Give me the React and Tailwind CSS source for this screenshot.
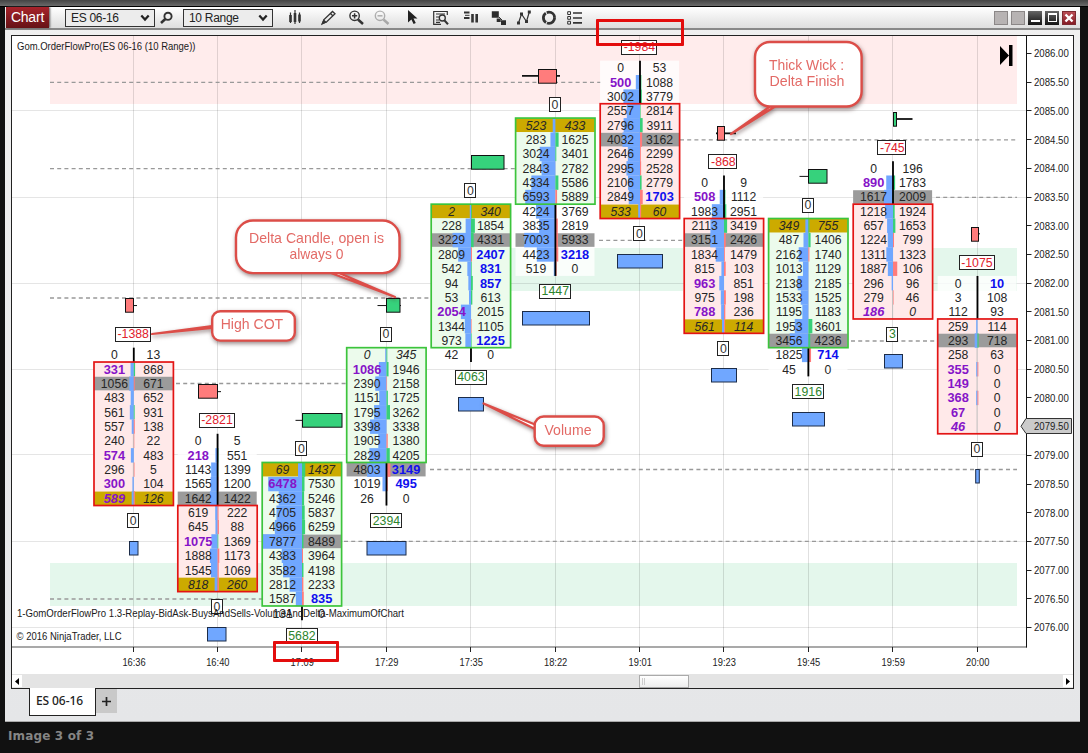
import React from "react";

const COLUMNS = [
  { time: "16:36", start: 21, box: [22, 31], tone: "red", top: "-1388", bottom: "0", candle: [125.5, 133.5, 133.5, 137], volume: [129.5, 138],
    rows: [[0, 13], [331, 868, "L"], [1056, 671, "y"], [483, 652], [561, 931], [557, 138], [240, 22], [574, 483, "L"], [296, 5], [300, 104, "L"], [589, 126, "Lg"]] },
  { time: "16:40", start: 27, box: [32, 37], tone: "red", top: "-2821", bottom: "0", candle: [198.5, 217.5, 217.5, 221], volume: [207.5, 226],
    rows: [[0, 5], [218, 551, "L"], [1143, 1399], [1565, 1200], [1642, 1422, "y"], [619, 222], [645, 88], [1075, 1369, "L"], [1888, 1173], [1545, 1069], [818, 260, "g"]] },
  { time: "17:09", start: 29, box: [29, 38], tone: "green", top: "0", bottom: "5682", candle: [302.5, 342, 295.5, 302], up: true,
    rows: [[69, 1437, "g"], [6478, 7530, "L"], [4362, 5246], [4705, 5837], [4966, 6259], [7877, 8489, "y"], [4383, 3964], [3582, 4198], [2812, 2233], [1587, 835, "R"], [131, 0]] },
  { time: "17:29", start: 21, box: [21, 28], tone: "green", top: "0", bottom: "2394", candle: [386.5, 400, 377.5, 401], up: true, volume: [367, 406],
    rows: [[0, 345, "i"], [1086, 1946, "L"], [2390, 2158], [1151, 1725], [1795, 3262], [3398, 3338], [1905, 1380], [2829, 4205], [4803, 3149, "yR"], [1019, 495, "R"], [26, 0]] },
  { time: "17:35", start: 11, box: [11, 20], tone: "green", top: "0", bottom: "4063", candle: [471.5, 504, 471.5, 504], up: true, volume: [458.5, 483.5],
    rows: [[2, 340, "g"], [228, 1854], [3229, 4331, "y"], [2809, 2407, "R"], [542, 831, "R"], [94, 857, "R"], [53, 613], [2054, 2015, "L"], [1344, 1105], [973, 1225, "R"], [42, 0]] },
  { time: "18:22", start: 5, box: [5, 10], tone: "green", top: "0", bottom: "1447", candle: [538.5, 556.5, 522, 560], thick: true, volume: [522.5, 589.5],
    rows: [[523, 433, "g"], [283, 1625], [3024, 3401], [2843, 2782], [4334, 5586], [6593, 5889], [4224, 3769], [3835, 2819], [7003, 5933, "y"], [4423, 3218, "R"], [519, 0]] },
  { time: "19:01", start: 1, box: [4, 11], tone: "red", top: "-1984", bottom: "0", volume: [617.5, 662.5],
    rows: [[0, 53], [500, 1088, "L"], [3002, 3779], [2557, 2814], [2796, 3911], [4032, 3162, "y"], [2646, 2299], [2995, 2528], [2106, 2779], [2849, 1703, "R"], [533, 60, "g"]] },
  { time: "19:23", start: 9, box: [12, 19], tone: "red", top: "-868", bottom: "0", candle: [717.5, 724.5, 716, 736], thick: true, volume: [711.5, 736.5],
    rows: [[0, 9], [508, 1112, "L"], [1983, 2951], [2113, 3419], [3151, 2426, "y"], [1834, 1479], [815, 103], [963, 851, "L"], [975, 198], [788, 236, "L"], [561, 114, "g"]] },
  { time: "19:45", start: 12, box: [12, 20], tone: "green", top: "0", bottom: "1916", candle: [808.5, 827, 799.5, 808], up: true, volume: [792.5, 824.5],
    rows: [[349, 755, "g"], [487, 1406], [2162, 1740], [1013, 1129], [2138, 2185], [1533, 1525], [1195, 1183], [1953, 3601], [3456, 4236, "y"], [1825, 714, "R"], [45, 0]] },
  { time: "19:59", start: 8, box: [11, 18], tone: "red", top: "-745", bottom: "3", candle: [893.5, 896.5, 896, 912.5], up: true, thick: true, volume: [884.5, 902.5],
    rows: [[0, 196], [890, 1783, "L"], [1617, 2009, "y"], [1218, 1924], [657, 1653], [1224, 799], [1311, 1323], [1887, 106], [296, 96], [279, 46], [186, 0, "Li"]] },
  { time: "20:00", start: 16, box: [19, 26], tone: "red", top: "-1075", bottom: "0", candle: [971.5, 978.5, 978, 980], volume: [975.7, 979.3],
    rows: [[0, 10, "R"], [3, 108], [112, 93], [259, 114], [293, 718, "y"], [258, 63], [355, 0, "L"], [149, 0, "L"], [368, 0, "L"], [67, 0, "L"], [46, 0, "Li"]] },
];

const TICK = 14.35;
const SCALE = 39 / 16366;
const CENTERS = [133.4, 217.2, 301.6, 386.1, 470.6, 555, 639.6, 723.6, 808, 892.6, 977.1];
const rowY = (tick) => 53.5 + tick * TICK;
const columnX = (i) => CENTERS[i];
const labelColor = (t) => (t === "0" ? "#333" : t[0] === "-" ? "#e0202c" : "#2c842c");

const DASHES = [
  [82.3, 50, 601], [139.8, 680, 1017], [168.7, 50, 516], [197.3, 936, 1017], [240.4, 599, 683], [298, 50, 431],
  [341, 851, 937], [383.5, 176, 347], [469.5, 430, 1017], [541.3, 344, 1017], [599, 50, 262],
];

function ValueLabel({ x, y, text }) {
  const w = text.length === 1 ? 10.5 : text.length * 6.67 + 4 - (text[0] === "-" ? 2.3 : 0);
  const cx = x - 1 + (text.length === 4 && text[0] !== "-" ? 0.5 : 0);
  return (
    <g>
      <rect x={Math.round(cx - w / 2) + 0.5} y={Math.round(y - 7) + 0.5} width={Math.round(w)} height="14" fill="#fff" stroke="#222" strokeWidth="1" />
      <text x={cx + 0.8} y={y + 4.6} textAnchor="middle" fontSize="12.3" fill={labelColor(text)}>{text}</text>
    </g>
  );
}

function Column({ data, index }) {
  const x = columnX(index);
  const { start, rows, box, tone } = data;
  const end = start + rows.length - 1;
  const top = (t) => rowY(t) - TICK / 2;
  const red = tone === "red";
  return (
    <g>
      <rect x={x - 39.5} y={top(start)} width="79" height={rows.length * TICK} fill="#fff" fillOpacity="0.8" />
      <rect x={x - 39.5} y={top(box[0])} width="79.5" height={(box[1] - box[0] + 1) * TICK} fill={red ? "#ffe9e9" : "#ecfbec"} />
      <line x1={x} x2={x} y1={top(start)} y2={top(end + 1)} stroke="#bdbdbd" />
      {rows.map(([l, r, f = ""], i) => {
        const y = top(start + i);
        const band = f.includes("g") ? "#ccaa00" : f.includes("y") ? "#9b9b9b" : null;
        const vol = (l + r) * SCALE;
        const delta = Math.abs(r - l) * SCALE;
        return (
          <g key={i}>
            {band && <rect x={x - 39.5} y={y + 0.4} width="79" height={TICK - 0.8} fill={band} />}
            {vol > 0.8 && <rect x={x - vol} y={y} width={vol + 0.4} height={TICK + 0.1} fill="#70a7ff" />}
            {delta > 0.5 && <rect x={x + 0.4} y={y} width={delta} height={TICK} fill={r > l ? "#38d078" : "#ff7c7c"} />}
          </g>
        );
      })}
      {box[0] > start && <line x1={x + 0.4} x2={x + 0.4} y1={top(start)} y2={top(box[0])} stroke="#000" strokeWidth="1.8" />}
      {box[1] < end && <line x1={x + 0.4} x2={x + 0.4} y1={top(box[1] + 1)} y2={top(end + 1)} stroke="#000" strokeWidth="1.8" />}
      {rows.map(([l, r, f = ""], i) => {
        const y = rowY(start + i) + 4.4;
        const style = /[gi]/.test(f) ? "italic" : "normal";
        const L = f.includes("L");
        const R = f.includes("R");
        return (
          <g key={i} textAnchor="middle" fontStyle={style}>
            <text x={x - 19} y={y} fontSize={L ? 12.8 : 12.2} fontWeight={L ? 700 : 400} fill={L ? "#8614c8" : "#262626"}>{l}</text>
            <text x={x + 20} y={y} fontSize={R ? 12.8 : 12.2} fontWeight={R ? 700 : 400} fill={R ? "#1010ee" : "#262626"}>{r}</text>
          </g>
        );
      })}
      <rect x={x - 39.4} y={top(box[0])} width="79.4" height={(box[1] - box[0] + 1) * TICK} fill="none" stroke={red ? "#e31414" : "#3cc43c"} strokeWidth="1.7" />
      <ValueLabel x={x} y={rowY(start) - 21.2} text={data.top} />
      <ValueLabel x={x} y={rowY(end) + 22} text={data.bottom} />
      {data.candle && (
        <g stroke="#111">
          <line x1={data.candle[2]} x2={data.candle[3]} y1={rowY(start) - 49.3} y2={rowY(start) - 49.3} strokeWidth={data.thick ? 1.8 : 1} />
          <rect x={data.candle[0]} y={Math.round(rowY(start) - 56.6) + 0.5} width={data.candle[1] - data.candle[0]} height="13.7" fill={data.up ? "#36d27c" : "#ff7c7c"} />
        </g>
      )}
      {data.volume && (
        <rect x={data.volume[0]} y={Math.round(rowY(end) + 42.3) + 0.5} width={data.volume[1] - data.volume[0]} height="13.5" fill="#70a7ff" stroke="#1c2c48" />
      )}
    </g>
  );
}

function Callout({ x, y, w, h, r, tail, lines }) {
  return (
    <g className="drop-shadow-[1px_2px_2px_rgba(70,40,40,0.55)]">
      <path d={tail} fill="#fff" stroke="#dc4d48" strokeWidth="2.2" strokeLinejoin="round" />
      <rect x={x} y={y} width={w} height={h} rx={r} fill="#fff" stroke="#dc4d48" strokeWidth="2.4" />
      {lines.map(([t, tx, ty, len]) => (
        <text key={t} x={tx} y={ty} fontSize="14.4" fill="#e36a66" textLength={len} lengthAdjust="spacingAndGlyphs">{t}</text>
      ))}
    </g>
  );
}

function Chart() {
  const prices = Array.from({ length: 21 }, (_, i) => (2086 - i * 0.5).toFixed(2));
  return (
    <svg width="1061" height="638" viewBox="12 36 1061 638" className="block bg-white" fontFamily="'Liberation Sans', Arial, sans-serif">
      <rect x="50" y="36" width="967" height="68" fill="#ffecec" />
      <rect x="511" y="248" width="172" height="43" fill="#e4f7ec" />
      <rect x="932" y="248" width="85" height="43" fill="#e4f7ec" />
      <rect x="50" y="563" width="967" height="43" fill="#e4f7ec" />
      {[110.5, 197.5, 283.5, 369.5, 454.5, 541.5, 627.5].map((y) => <line key={y} x1="12" x2="1026" y1={y} y2={y} stroke="#000" strokeOpacity="0.1" />)}
      {COLUMNS.map((c, i) => <line key={c.time} x1={Math.floor(columnX(i)) + 0.5} x2={Math.floor(columnX(i)) + 0.5} y1="36" y2="647" stroke="#000" strokeOpacity="0.12" />)}
      {DASHES.map(([y, a, b]) => <line key={y} x1={a} x2={b} y1={y} y2={y} stroke="#999" strokeWidth="1.3" strokeDasharray="4 3.2" />)}

      <text x="17" y="49.5" fontSize="10.3" fill="#1a1a1a" textLength="178.5" lengthAdjust="spacingAndGlyphs">Gom.OrderFlowPro(ES 06-16 (10 Range))</text>
      {COLUMNS.map((c, i) => <Column key={c.time} data={c} index={i} />)}
      <text x="17" y="617" fontSize="10.3" fill="#1a1a1a" textLength="387" lengthAdjust="spacingAndGlyphs">1-GomOrderFlowPro 1.3-Replay-BidAsk-BuysAndSells-VolumeAndDelta-MaximumOfChart</text>
      <text x="16.5" y="639.7" fontSize="10.3" fill="#1a1a1a" textLength="105" lengthAdjust="spacingAndGlyphs">© 2016 NinjaTrader, LLC</text>

      <line x1="12" x2="1027" y1="647" y2="647" stroke="#555" strokeWidth="1.2" />
      <line x1="1026.5" x2="1026.5" y1="36" y2="647.5" stroke="#111" />
      {COLUMNS.map((c, i) => (
        <g key={c.time}>
          <line x1={Math.floor(columnX(i)) + 0.5} x2={Math.floor(columnX(i)) + 0.5} y1="647" y2="652" stroke="#222" />
          <text x={columnX(i) - 11} y="666.3" fontSize="10.3" fill="#222" textLength="23.3" lengthAdjust="spacingAndGlyphs">{c.time}</text>
        </g>
      ))}
      {prices.map((p, i) => (
        <g key={p}>
          <line x1="1027" x2="1031.5" y1={Math.floor(rowY(i * 2)) + 0.5} y2={Math.floor(rowY(i * 2)) + 0.5} stroke="#222" />
          {p !== "2079.50" && <text x="1034" y={rowY(i * 2) + 3.9} fontSize="10.3" fill="#222" textLength="34.8" lengthAdjust="spacingAndGlyphs">{p}</text>}
        </g>
      ))}
      <path d="M1021 426.3 L1026 418.5 H1071.5 V433.5 H1026 Z" fill="#cbcbcb" stroke="#333" />
      <text x="1034" y="430.2" fontSize="10.3" fill="#222" textLength="34.8" lengthAdjust="spacingAndGlyphs">2079.50</text>

      <path d="M1000 46 L1009 55.5 L1000 65 Z M1009 45 h3.5 v21 h-3.5 Z" fill="#000" />

      <Callout x={212.2} y={311.2} w={82.6} h={29.4} r={8} tail="M212 326 L152 334 L212 328 Z" lines={[["High COT", 220.7, 329, 62.5]]} />
      <Callout x={236} y={220.5} w={163.5} h={52.6} r={17} tail="M331 273 L395 297 L339 273 Z" lines={[["Delta Candle, open is", 249, 242.5, 135], ["always 0", 289.5, 258.8, 54]]} />
      <Callout x={534.7} y={416.5} w={69} h={29.2} r={9} tail="M535 424.5 L483.5 403.5 L535 429 Z" lines={[["Volume", 544.5, 435.2, 47]]} />
      <Callout x={755} y={42} w={106.6} h={64.5} r={15} tail="M770 106.5 L731 134 L775 106.5 Z" lines={[["Thick Wick :", 769, 69.5, 75], ["Delta Finish", 769.5, 85.8, 75]]} />
    </svg>
  );
}

function Icon({ x, w, children, className }) {
  return (
    <svg width={w} height="18" viewBox={`${x} 9 ${w} 18`} className={`shrink-0 ${className}`} fill="none" stroke="#333" strokeWidth="1.6">
      {children}
    </svg>
  );
}

function Select({ label, className }) {
  return (
    <div className={`flex h-[18px] w-[90px] shrink-0 items-center justify-between border border-[#333] bg-[#ececec] pl-[5px] pr-[4px] text-[12px] leading-none text-[#222] ${className}`}>
      <span className="whitespace-nowrap tracking-[-0.3px]">{label}</span>
      <svg width="10" height="8" viewBox="0 0 10 8" fill="none" stroke="#222" strokeWidth="2.2"><path d="M1.3 1.5 L5 5.6 L8.7 1.5" /></svg>
    </div>
  );
}

function Toolbar() {
  return (
    <div className="flex h-[23px] shrink-0 items-center border-b-2 border-[#888] bg-gradient-to-b from-white to-[#dedede]">
      <div className="ml-px flex h-[21px] w-[43px] shrink-0 items-center justify-center bg-gradient-to-b from-[#a8232b] to-[#661216] text-[14px] tracking-[-0.2px] text-white shadow-[1px_0_2px_#555]">Chart</div>
      <Select label="ES 06-16" className="ml-[16px]" />
      <Icon x={160} w={14} className="ml-[5px]">
        <circle cx="168" cy="16.3" r="3.6" strokeWidth="1.9" /><path d="M165.3 19 L161 23" strokeWidth="2.6" />
      </Icon>
      <Select label="10 Range" className="ml-[9px]" />
      <Icon x={288} w={14} className="ml-[15px]">
        <path d="M290.5 12.5 V23 M295 10 V24 M299.5 12.5 V23" strokeWidth="1.2" /><path d="M290.5 15 V22 M295 13 V22 M299.5 14.5 V21.5" strokeWidth="2.6" />
      </Icon>
      <Icon x={321} w={16} className="ml-[19px]">
        <path d="M322.5 23.5 L324 19.5 L332.5 11.5 L335 13.8 L326.5 22 Z M330.5 13.5 L333 16" strokeWidth="1.3" /><path d="M322.5 23.5 L325.5 22 L323.8 20.5 Z" fill="#333" />
      </Icon>
      <Icon x={348} w={16} className="ml-[11px]">
        <circle cx="354.6" cy="15.8" r="4.7" strokeWidth="1.4" /><path d="M352 15.8 H357.2 M354.6 13.2 V18.4" strokeWidth="1.5" /><path d="M358 19.5 L363 24" strokeWidth="2.5" />
      </Icon>
      <Icon x={374} w={16} className="ml-[10px] opacity-35">
        <circle cx="380" cy="15.8" r="4.7" strokeWidth="1.4" /><path d="M377.5 15.8 H382.5" strokeWidth="1.5" /><path d="M383.5 19.5 L388.5 24" strokeWidth="2.5" />
      </Icon>
      <Icon x={407} w={12} className="ml-[17px]">
        <path d="M408 10 L417.5 18.5 H413.5 L415.8 23 L413.6 24 L411.4 19.6 L408 22.5 Z" fill="#222" stroke="none" />
      </Icon>
      <Icon x={432} w={17} className="ml-[13px]">
        <path d="M447.3 15 V11.5 H433.7 V24.3 H441 M436 14 H445 M436 17 H439 M436 20 H439 M436 22.3 H440" strokeWidth="1.2" /><circle cx="442.3" cy="18" r="3" strokeWidth="1.3" /><path d="M444.3 20.3 L448 24.3" strokeWidth="2" />
      </Icon>
      <Icon x={463} w={16} className="ml-[14px]">
        <path d="M464 12.5 H469.5 M464 18 H469.5" strokeWidth="1.8" /><path d="M465 15.3 H469.5" strokeWidth="1" /><path d="M472.5 14 V22.5 M476.7 14 V22.5" strokeWidth="2.6" />
      </Icon>
      <Icon x={491} w={16} className="ml-[12px]">
        <path d="M491.8 11.3 H498.8 V17.7 H491.8 Z M501 20.3 H506 V25 H501 Z M496.7 18.4 H500.7 V22 H496.7 Z" fill="#2c2c2c" stroke="none" /><path d="M499 17 L502 20" strokeWidth="1" />
      </Icon>
      <Icon x={516} w={16} className="ml-[9px]">
        <path d="M518.5 23 L521.5 14 L526.5 21.5 L529.3 12" strokeWidth="1.2" /><path d="M517 21.5 h3 v3 h-3 Z M520 12.5 h3 v3 h-3 Z M525 20 h3 v3 h-3 Z M527.8 10.5 h3 v3 h-3 Z" fill="#333" stroke="none" />
      </Icon>
      <Icon x={541} w={16} className="ml-[9px]">
        <circle cx="549" cy="17.8" r="5.6" strokeWidth="2.8" strokeDasharray="10.7 1" />
      </Icon>
      <Icon x={566} w={17} className="ml-[9px]">
        <path d="M567.7 11.7 h2.8 v2.8 h-2.8 Z M567.7 16.5 h2.8 v2.8 h-2.8 Z M567.7 21.3 h2.8 v2.8 h-2.8 Z" strokeWidth="1" /><path d="M573 13 H582 M573 18 H582 M573 22.8 H582" strokeWidth="1.7" />
      </Icon>
      <div className="ml-auto mr-[4px] flex gap-[3px]">
        <div className="size-[14px] border border-[#8b8787] bg-[#b7b3b3]" />
        <div className="size-[14px] border border-[#8b8787] bg-[#b7b3b3]" />
        <div className="flex size-[14px] items-end justify-center bg-gradient-to-b from-[#666] to-[#151515] pb-[3px]"><div className="h-[2px] w-[9px] bg-white" /></div>
        <div className="flex size-[14px] items-center justify-center bg-gradient-to-b from-[#666] to-[#151515]"><div className="h-[9px] w-[9px] border border-t-2 border-white" /></div>
        <div className="flex size-[14px] items-center justify-center border border-[#7c2a30] bg-gradient-to-b from-[#ba4d55] to-[#861c26]">
          <svg width="10" height="10" viewBox="0 0 10 10" stroke="#fff" strokeWidth="2.4"><path d="M1.5 1.5 L8.5 8.5 M8.5 1.5 L1.5 8.5" /></svg>
        </div>
      </div>
    </div>
  );
}

export default function App() {
  return (
    <div className="relative flex h-[753px] w-[1088px] flex-col overflow-hidden bg-[#111] font-['Liberation_Sans',Arial,sans-serif]">
      <div className="h-[6px] shrink-0 bg-gradient-to-b from-[#444] to-[#6b6b6b]" />
      <div className="h-px shrink-0 bg-black" />
      <div className="ml-[5px] flex h-[715px] w-[1075px] shrink-0 flex-col border-b border-[#aaa] bg-gradient-to-b from-[#f0f0f0] to-[#e5e6e8]">
        <Toolbar />
        <div className="ml-[6px] mt-[5px] flex h-[654px] w-[1063px] shrink-0 flex-col border border-[#222] bg-white">
          <Chart />
          <div className="flex h-[14px] items-center bg-[#e4e4e4]">
            <div className="flex h-[12px] w-[10px] items-center justify-center bg-white"><svg width="4" height="7" viewBox="0 0 4 7"><path d="M4 0 V7 L0 3.5 Z" fill="#000" /></svg></div>
            <div className="ml-[617px] flex h-[13px] w-[50px] items-center gap-[1px] border border-[#aaa] bg-gradient-to-b from-white to-[#ededed] pl-[2px]"><div className="h-[7px] w-px bg-[#ccc]" /><div className="h-[7px] w-px bg-[#ccc]" /></div>
            <div className="ml-auto flex h-[12px] w-[10px] items-center justify-center bg-white"><svg width="4" height="7" viewBox="0 0 4 7"><path d="M0 0 V7 L4 3.5 Z" fill="#000" /></svg></div>
          </div>
        </div>
        <div className="-mt-px ml-[24px] flex">
          <div className="flex h-[28px] w-[67px] items-center border border-t-0 border-[#222] bg-white pb-[1px] pl-[6px] font-['Noto_Sans',sans-serif] text-[12px] font-medium tracking-[-0.1px] text-[#222]">ES 06-16</div>
          <div className="mt-px flex h-[24px] w-[21px] items-center justify-center bg-[#c9c9c9]"><svg width="9" height="9" viewBox="0 0 9 9" stroke="#222" strokeWidth="1.7"><path d="M4.5 0 V9 M0 4.5 H9" /></svg></div>
        </div>
      </div>
      <div className="flex flex-1 items-center pb-[4px] pl-[8px] font-['DejaVu_Sans',sans-serif] text-[12px] font-bold tracking-[0.15px] text-[#858585]">Image 3 of 3</div>
      <div className="absolute left-[596px] top-[19px] h-[27px] w-[88px] rounded-[1px] border-[3px] border-[#e30d0d]" />
      <div className="absolute left-[273px] top-[641px] h-[21px] w-[66px] rounded-[1px] border-[3px] border-[#e30d0d]" />
    </div>
  );
}
